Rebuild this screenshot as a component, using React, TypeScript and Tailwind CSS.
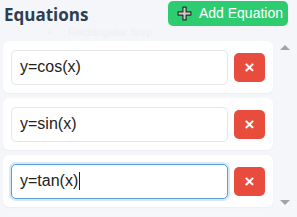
import React from 'react';

const equations = ['y=cos(x)', 'y=sin(x)', 'y=tan(x)'];

const PlusIcon = () => (
  <svg width="15" height="15" viewBox="0 0 14 14">
    <path
      d="M5.5 1h3v4.5h4.5v3h-4.5v4.5h-3v-4.5h-4.5v-3h4.5z"
      fill="#c9ccc9"
      stroke="#2b2b2b"
      strokeWidth="1.1"
      strokeLinejoin="round"
    />
  </svg>
);

const App: React.FC = () => {
  return (
    <div className="relative w-[297px] h-[217px] overflow-hidden bg-[#f4f6f9]" style={{ fontFamily: '"Liberation Sans", Arial, sans-serif' }}>
      {/* header */}
      <div className="flex items-center justify-between h-[28px] pl-[4px] pr-[9px]">
        <h2 className="text-[17px] font-bold text-[#2c3e50] mt-[1px]" style={{ fontFamily: '"Open Sans", sans-serif' }}>
          Equations
        </h2>
        <button className="flex items-center gap-[7px] h-[25px] mt-[-1px] pl-[9px] pr-[5px] rounded-[5px] bg-[#2ecc71] text-white text-[14px]">
          <PlusIcon />
          <span>Add Equation</span>
        </button>
      </div>

      {/* list + scrollbar */}
      <div className="flex mt-[13px]">
        <div className="flex flex-col gap-[5px] pl-[3px] w-[273px]">
          {equations.map((eq, i) => (
            <div key={eq} className="flex items-center gap-[6px] h-[52px] px-[8px] bg-white rounded-[6px] shadow-[0_1px_2px_rgba(0,0,0,0.04)]">
              <div
                className={
                  'flex items-center flex-1 h-[35px] px-[8px] rounded-[5px] bg-white text-[16px] text-[#222] ' +
                  (i === 2
                    ? 'border border-[#5a9fd6] shadow-[0_0_0_2px_rgba(90,159,214,0.25)]'
                    : 'border border-[#e3e6ea]')
                }
              >
                {eq}
                {i === 2 && <span className="w-[1px] h-[18px] bg-[#222] ml-[1px]" />}
              </div>
              <button className="flex items-center justify-center w-[31px] h-[29px] rounded-[5px] bg-[#e74c3c] text-white text-[17px] font-bold leading-none">
                ×
              </button>
            </div>
          ))}
        </div>
        <div className="flex flex-col items-center justify-between w-[24px] h-[170px] pt-[4px] pb-[6px]">
          <div className="w-0 h-0 border-l-[5px] border-r-[5px] border-b-[5px] border-l-transparent border-r-transparent border-b-[#a3a3a3]" />
          <div className="w-0 h-0 border-l-[5px] border-r-[5px] border-t-[5px] border-l-transparent border-r-transparent border-t-[#a3a3a3]" />
        </div>
      </div>

      {/* faint tooltip ghost */}
      <div className="absolute left-[40px] top-[24px] w-[125px] h-[16px] flex items-center text-[11px] text-[#eef0f3]">
        <span className="ml-[8px] mr-[16px]">•</span>
        Rectangular Snip
      </div>
    </div>
  );
};

export default App;
